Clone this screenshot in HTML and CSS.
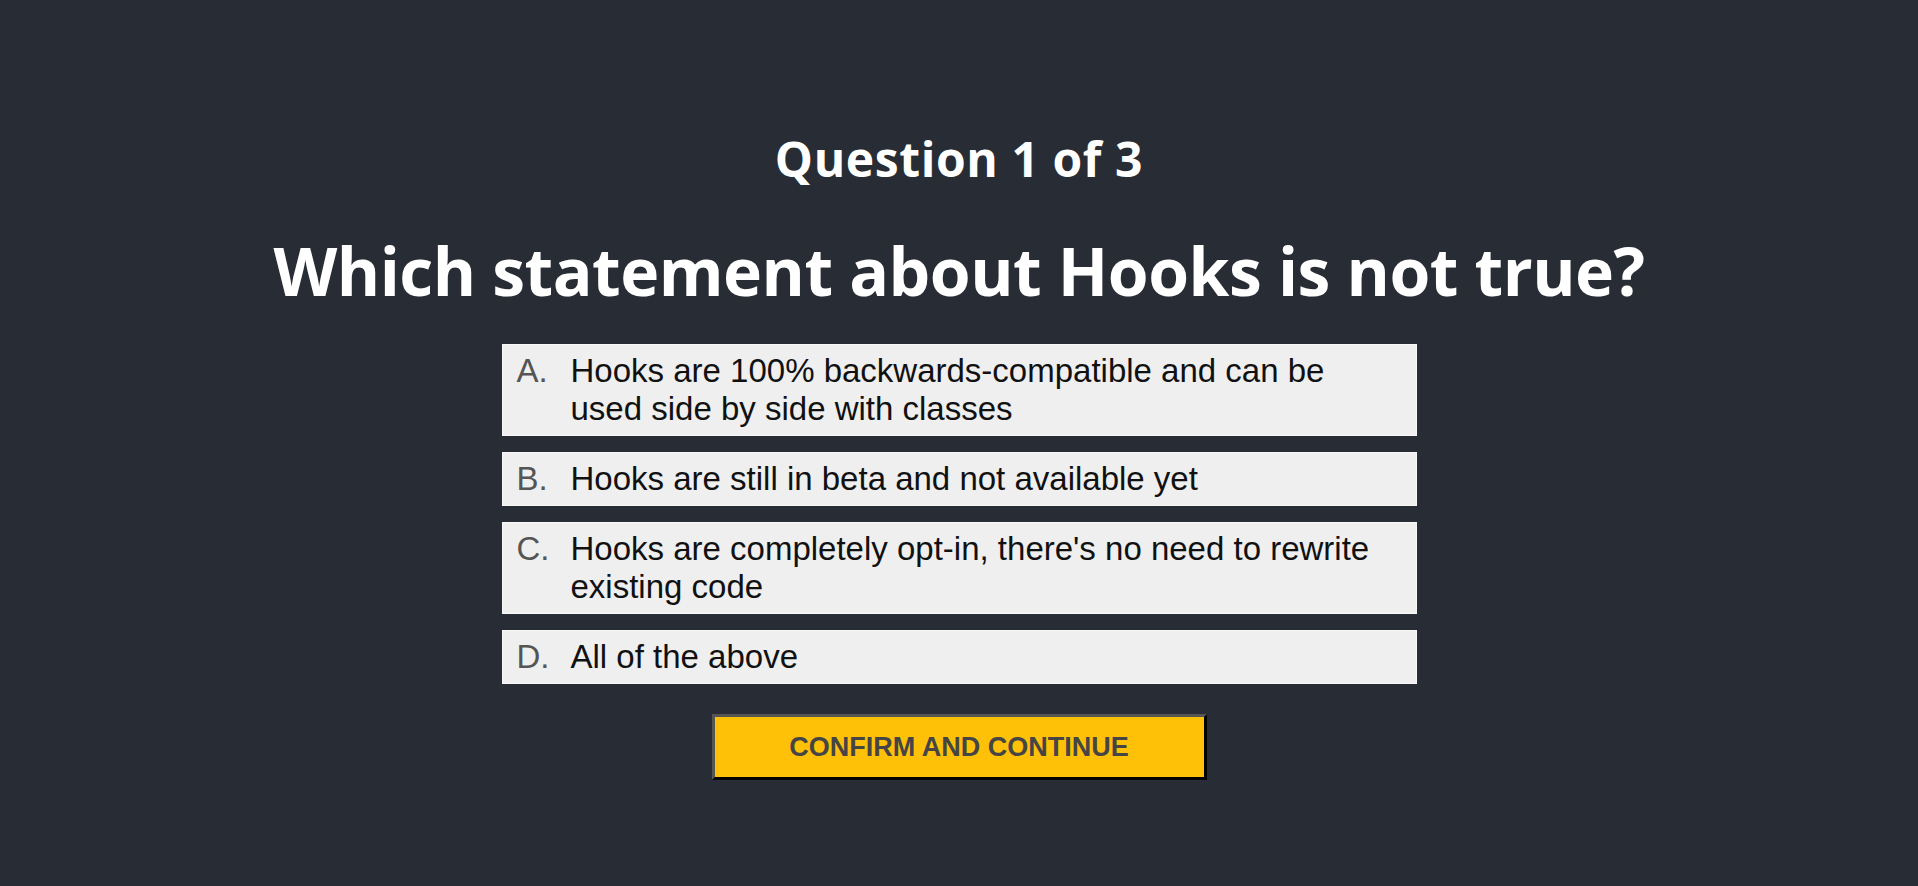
FILE: index.html
```html
<!DOCTYPE html>
<html lang="en">
<head>
<meta charset="utf-8">
<title>Quiz</title>
<link rel="stylesheet" href="styles.css">
</head>
<body>
<main class="quiz">
  <h2 class="counter">Question 1 of 3</h2>
  <h1 class="question">Which statement about Hooks is not true?</h1>
  <div class="options">
    <button class="option"><span class="letter">A.</span><span class="answer">Hooks are 100% backwards-compatible and can be used side by side with classes</span></button>
    <button class="option"><span class="letter">B.</span><span class="answer">Hooks are still in beta and not available yet</span></button>
    <button class="option"><span class="letter">C.</span><span class="answer">Hooks are completely opt-in, there's no need to rewrite existing code</span></button>
    <button class="option"><span class="letter">D.</span><span class="answer">All of the above</span></button>
  </div>
  <button class="confirm">CONFIRM AND CONTINUE</button>
</main>
</body>
</html>
```
FILE: styles.css
```css
html, body {
  margin: 0;
  padding: 0;
  height: 100%;
}
body {
  background: #282c34;
  font-family: "Liberation Sans", Arial, sans-serif;
}
.quiz {
  display: flex;
  flex-direction: column;
  align-items: center;
  padding-top: 135px;
}
.counter {
  margin: 0;
  font-family: "Open Sans", "Noto Sans", sans-serif;
  font-weight: 700;
  font-size: 48px;
  line-height: 1;
  color: #fff;
  letter-spacing: 0.6px;
}
.question {
  margin: 54px 0 0;
  font-family: "Open Sans", "Noto Sans", sans-serif;
  font-weight: 700;
  font-size: 66px;
  line-height: 1;
  color: #fff;
  letter-spacing: -0.5px;
}
.options {
  margin-top: 41px;
  width: 915px;
  display: flex;
  flex-direction: column;
  gap: 16px;
}
.option {
  display: flex;
  align-items: flex-start;
  text-align: left;
  background: #efefef;
  border: 1px solid #f9f9f9;
  padding: 7px 30px 7px 14px;
  margin: 0;
  font-family: "Liberation Sans", Arial, sans-serif;
  font-size: 33px;
  line-height: 38px;
  color: #111;
  cursor: pointer;
}
.letter {
  flex: 0 0 54px;
  color: #555;
}
.answer {
  flex: 1;
}
.confirm {
  margin-top: 30px;
  box-sizing: border-box;
  width: 495px;
  height: 66px;
  background: #ffc107;
  border-style: solid;
  border-width: 3px;
  border-color: #555 #000 #000 #555;
  font-family: "Liberation Sans", Arial, sans-serif;
  font-weight: 700;
  font-size: 27px;
  color: #454545;
  padding: 0;
  cursor: pointer;
}
```
